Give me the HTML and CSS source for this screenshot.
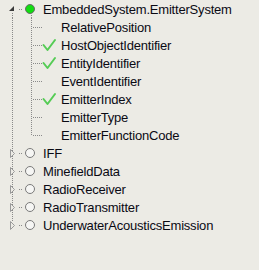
FILE: index.html
```html
<!DOCTYPE html>
<html>
<head>
<meta charset="utf-8">
<link rel="stylesheet" href="styles.css">
</head>
<body>
<div class="tree">
  <div class="row">
    <svg class="gut root" width="40" height="18" viewBox="0 0 40 18">
      <line class="dot" x1="12.5" y1="13" x2="12.5" y2="18"/>
      <polygon class="tri-open" points="14,6 14,11 9,11"/>
      <line class="dot" x1="19" y1="9.5" x2="23" y2="9.5"/>
      <line class="dot" x1="31.5" y1="15" x2="31.5" y2="18"/>
      <circle class="on" cx="30" cy="9" r="4.5"/>
    </svg>
    <span class="label">EmbeddedSystem.EmitterSystem</span>
  </div>

  <div class="row">
    <svg class="gut child" width="58" height="18" viewBox="0 0 58 18">
      <line class="dot" x1="12.5" y1="0" x2="12.5" y2="18"/>
      <line class="dot" x1="31.5" y1="0" x2="31.5" y2="18"/>
      <line class="dot" x1="33" y1="9.5" x2="42" y2="9.5"/>
    </svg>
    <span class="label">RelativePosition</span>
  </div>
  <div class="row">
    <svg class="gut child" width="58" height="18" viewBox="0 0 58 18">
      <line class="dot" x1="12.5" y1="0" x2="12.5" y2="18"/>
      <line class="dot" x1="31.5" y1="0" x2="31.5" y2="18"/>
      <line class="dot" x1="33" y1="9.5" x2="42" y2="9.5"/>
      <polyline class="check" points="43.5,9 47.5,14 55,4"/>
    </svg>
    <span class="label">HostObjectIdentifier</span>
  </div>
  <div class="row">
    <svg class="gut child" width="58" height="18" viewBox="0 0 58 18">
      <line class="dot" x1="12.5" y1="0" x2="12.5" y2="18"/>
      <line class="dot" x1="31.5" y1="0" x2="31.5" y2="18"/>
      <line class="dot" x1="33" y1="9.5" x2="42" y2="9.5"/>
      <polyline class="check" points="43.5,9 47.5,14 55,4"/>
    </svg>
    <span class="label">EntityIdentifier</span>
  </div>
  <div class="row">
    <svg class="gut child" width="58" height="18" viewBox="0 0 58 18">
      <line class="dot" x1="12.5" y1="0" x2="12.5" y2="18"/>
      <line class="dot" x1="31.5" y1="0" x2="31.5" y2="18"/>
      <line class="dot" x1="33" y1="9.5" x2="42" y2="9.5"/>
    </svg>
    <span class="label">EventIdentifier</span>
  </div>
  <div class="row">
    <svg class="gut child" width="58" height="18" viewBox="0 0 58 18">
      <line class="dot" x1="12.5" y1="0" x2="12.5" y2="18"/>
      <line class="dot" x1="31.5" y1="0" x2="31.5" y2="18"/>
      <line class="dot" x1="33" y1="9.5" x2="42" y2="9.5"/>
      <polyline class="check" points="43.5,9 47.5,14 55,4"/>
    </svg>
    <span class="label">EmitterIndex</span>
  </div>
  <div class="row">
    <svg class="gut child" width="58" height="18" viewBox="0 0 58 18">
      <line class="dot" x1="12.5" y1="0" x2="12.5" y2="18"/>
      <line class="dot" x1="31.5" y1="0" x2="31.5" y2="18"/>
      <line class="dot" x1="33" y1="9.5" x2="42" y2="9.5"/>
    </svg>
    <span class="label">EmitterType</span>
  </div>
  <div class="row">
    <svg class="gut child" width="58" height="18" viewBox="0 0 58 18">
      <line class="dot" x1="12.5" y1="0" x2="12.5" y2="18"/>
      <line class="dot" x1="31.5" y1="0" x2="31.5" y2="10"/>
      <line class="dot" x1="33" y1="9.5" x2="42" y2="9.5"/>
    </svg>
    <span class="label">EmitterFunctionCode</span>
  </div>

  <div class="row">
    <svg class="gut root" width="40" height="18" viewBox="0 0 40 18">
      <line class="dot" x1="12.5" y1="0" x2="12.5" y2="18"/>
      <polygon class="tri-closed" points="10.5,5.5 10.5,13.5 14.5,9.5"/>
      <line class="dot" x1="19" y1="9.5" x2="23" y2="9.5"/>
      <circle class="off" cx="30" cy="9" r="4.5"/>
    </svg>
    <span class="label">IFF</span>
  </div>
  <div class="row">
    <svg class="gut root" width="40" height="18" viewBox="0 0 40 18">
      <line class="dot" x1="12.5" y1="0" x2="12.5" y2="18"/>
      <polygon class="tri-closed" points="10.5,5.5 10.5,13.5 14.5,9.5"/>
      <line class="dot" x1="19" y1="9.5" x2="23" y2="9.5"/>
      <circle class="off" cx="30" cy="9" r="4.5"/>
    </svg>
    <span class="label">MinefieldData</span>
  </div>
  <div class="row">
    <svg class="gut root" width="40" height="18" viewBox="0 0 40 18">
      <line class="dot" x1="12.5" y1="0" x2="12.5" y2="18"/>
      <polygon class="tri-closed" points="10.5,5.5 10.5,13.5 14.5,9.5"/>
      <line class="dot" x1="19" y1="9.5" x2="23" y2="9.5"/>
      <circle class="off" cx="30" cy="9" r="4.5"/>
    </svg>
    <span class="label">RadioReceiver</span>
  </div>
  <div class="row">
    <svg class="gut root" width="40" height="18" viewBox="0 0 40 18">
      <line class="dot" x1="12.5" y1="0" x2="12.5" y2="18"/>
      <polygon class="tri-closed" points="10.5,5.5 10.5,13.5 14.5,9.5"/>
      <line class="dot" x1="19" y1="9.5" x2="23" y2="9.5"/>
      <circle class="off" cx="30" cy="9" r="4.5"/>
    </svg>
    <span class="label">RadioTransmitter</span>
  </div>
  <div class="row">
    <svg class="gut root" width="40" height="18" viewBox="0 0 40 18">
      <line class="dot" x1="12.5" y1="0" x2="12.5" y2="6"/>
      <polygon class="tri-closed" points="10.5,5.5 10.5,13.5 14.5,9.5"/>
      <line class="dot" x1="19" y1="9.5" x2="23" y2="9.5"/>
      <circle class="off" cx="30" cy="9" r="4.5"/>
    </svg>
    <span class="label">UnderwaterAcousticsEmission</span>
  </div>
</div>
</body>
</html>
```

FILE: styles.css
```css
html, body {
  margin: 0;
  padding: 0;
  background: #ecebe5;
}

.tree {
  display: flex;
  flex-direction: column;
}

.row {
  display: flex;
  align-items: flex-start;
  height: 18px;
}

.gut {
  flex: none;
  display: block;
}

.gut.root {
  margin-right: 3px;
}

.gut.child {
  margin-right: 3px;
}

.label {
  font-family: "Liberation Sans", Arial, sans-serif;
  font-size: 13px;
  letter-spacing: -0.2px;
  line-height: 18px;
  padding-top: 1px;
  color: #0a0a14;
  white-space: nowrap;
}

.dot {
  stroke: #8a8a8a;
  stroke-width: 1;
  stroke-dasharray: 1 1;
  shape-rendering: crispEdges;
}

.tri-open {
  fill: #3a3a3a;
  stroke: none;
}

.tri-closed {
  fill: #ecebe5;
  stroke: #9a9a9a;
  stroke-width: 1;
}

.on {
  fill: #11dd11;
  stroke: #6a6a6a;
  stroke-width: 1;
}

.off {
  fill: #f6f6f4;
  stroke: #7a7a7a;
  stroke-width: 1;
}

.check {
  fill: none;
  stroke: #55cc55;
  stroke-width: 2;
  stroke-linecap: round;
  stroke-linejoin: round;
}
```
